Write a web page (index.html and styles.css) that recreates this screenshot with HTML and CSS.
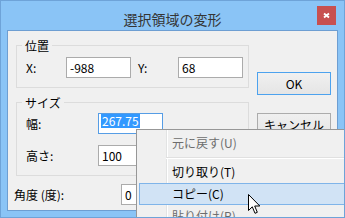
FILE: index.html
```html
<!DOCTYPE html>
<html lang="ja">
<head>
<meta charset="utf-8">
<title>選択領域の変形</title>
<link rel="stylesheet" href="styles.css">
</head>
<body>
<div class="window">
  <div class="titlebar">
    <div class="title">選択領域の変形</div>
    <div class="close">
      <svg width="19" height="19" viewBox="0 0 19 19"><path d="M7 7.5 L12 11.5 M12 7.5 L7 11.5" stroke="#fff" stroke-width="1.9" fill="none"/></svg>
    </div>
  </div>
  <div class="client">
    <div class="form">
      <fieldset class="group group-pos">
        <legend>位置</legend>
        <div class="row">
          <span class="label w40">X:</span><div class="field">-988</div>
          <span class="label w40 gapl">Y:</span><div class="field">68</div>
        </div>
      </fieldset>
      <fieldset class="group group-size">
        <legend>サイズ</legend>
        <div class="row">
          <span class="label w72">幅:</span><div class="field focus"><span class="sel">267.75</span></div>
        </div>
        <div class="row row-gap">
          <span class="label w72">高さ:</span><div class="field">100</div>
        </div>
      </fieldset>
      <div class="row angle">
        <span class="label w107">角度 (度):</span><div class="field">0</div>
      </div>
    </div>
    <div class="buttons">
      <div class="btn default">OK</div>
      <div class="btn">キャンセル</div>
    </div>
  </div>
  <div class="menu">
    <div class="item disabled">元に戻す(U)</div>
    <div class="sep"></div>
    <div class="item">切り取り(T)</div>
    <div class="item hot">コピー(C)</div>
    <div class="item disabled">貼り付け(P)</div>
  </div>
  <svg class="cursor" width="13" height="21" viewBox="0 0 13 21"><path d="M0.5 0.5 V16.5 L4.3 12.8 L7 19.3 L9.3 18.3 L6.7 12 H11.8 Z" fill="#fff" stroke="#000" stroke-width="1" stroke-linejoin="miter"/></svg>
</div>
</body>
</html>
```
FILE: styles.css
```css
html, body {
  margin: 0;
  padding: 0;
}
body {
  width: 345px;
  height: 218px;
  overflow: hidden;
  font-family: "Noto Sans CJK JP", "Noto Sans", sans-serif;
  font-size: 12px;
  color: #000;
}
.window {
  position: relative;
  width: 345px;
  height: 218px;
  box-sizing: border-box;
  border: 1px solid #6ea3d8;
  background: #8ac4f6;
  overflow: hidden;
  display: flex;
  flex-direction: column;
}
.titlebar {
  height: 29px;
  display: grid;
  grid-template-columns: 1fr auto 1fr;
  align-items: start;
}
.title {
  grid-column: 2;
  font-size: 14px;
  line-height: 20px;
  color: #353535;
  padding-top: 8px;
}
.close {
  grid-column: 3;
  justify-self: end;
  width: 19px;
  height: 19px;
  margin-top: 5px;
  margin-right: 8px;
  background: #c75050;
}
.close svg {
  display: block;
}
.client {
  height: 181px;
  box-sizing: border-box;
  margin: 0 6px;
  border: 1px solid #6d9ed2;
  background: #f0f0f0;
  display: flex;
  align-items: flex-start;
  padding: 7px 6px 0 6px;
}
.form {
  display: flex;
  flex-direction: column;
}
.group {
  margin: 0 0 0 2px;
  width: 233px;
  box-sizing: border-box;
  border: 1px solid #dcdcdc;
  padding: 4px 5px 9px 9px;
  min-width: 0;
}
.group legend {
  font-size: 12px;
  line-height: 15px;
  padding: 0 3px;
  margin-left: -4px;
}
.group-size {
  margin-top: 7px;
  padding-top: 3px;
}
.row {
  display: flex;
  align-items: center;
}
.row-gap {
  margin-top: 11px;
}
.angle {
  margin-top: 8px;
}
.label {
  line-height: 15px;
  white-space: nowrap;
}
.w40 { width: 40px; }
.w72 { width: 72px; }
.w107 { width: 107px; }
.gapl { margin-left: 7px; }
.field {
  width: 65px;
  height: 21px;
  box-sizing: border-box;
  border: 1px solid #ababab;
  background: #fff;
  padding-left: 3px;
  line-height: 19px;
  white-space: nowrap;
  overflow: hidden;
}
.field.focus {
  border-color: #569de5;
  padding-left: 2px;
}
.sel {
  display: inline-block;
  vertical-align: top;
  background: #3399ff;
  color: #fff;
  line-height: 14px;
  padding: 0 1px;
  margin-top: 0;
}
.buttons {
  display: flex;
  flex-direction: column;
  gap: 18px;
  margin-left: 8px;
  margin-top: 34px;
}
.btn {
  width: 74px;
  height: 23px;
  box-sizing: border-box;
  border: 1px solid #acacac;
  background: linear-gradient(#f0f0f0, #e5e5e5);
  text-align: center;
  line-height: 21px;
}
.btn.default {
  border-color: #4ca2ee;
}
.menu {
  position: absolute;
  left: 135px;
  top: 128px;
  width: 220px;
  height: 110px;
  box-sizing: border-box;
  border: 1px solid #979797;
  padding-top: 2px;
  background: linear-gradient(to right, #f0f0f0 29px, #e2e3e3 29px, #e2e3e3 30px, #ffffff 30px, #ffffff 31px, #f0f0f0 31px);
  background-color: #f0f0f0;
}
.item {
  height: 22px;
  box-sizing: border-box;
  margin-left: 2px;
  border: 1px solid transparent;
  padding-left: 32px;
  line-height: 20px;
  font-size: 12px;
  white-space: nowrap;
}
.item.disabled {
  color: #6d6d6d;
}
.item.hot {
  background: #d1e3f5;
  border-color: #7fb4e9;
}
.sep {
  margin: 3px 0 2px 29px;
  height: 1px;
  background: #e0e0e0;
  border-bottom: 1px solid #ffffff;
}
.cursor {
  position: absolute;
  left: 247px;
  top: 193px;
}
```
